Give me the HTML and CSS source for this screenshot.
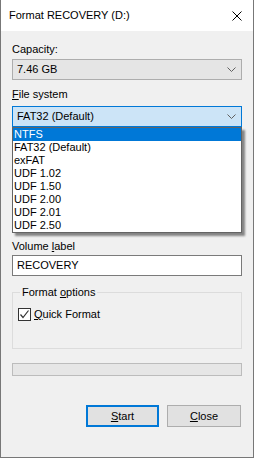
FILE: index.html
```html
<!DOCTYPE html>
<html lang="en">
<head>
    <meta charset="UTF-8">
    <meta name="viewport" content="width=device-width, initial-scale=1.0">
    <title>Format RECOVERY (D:)</title>
    <link rel="stylesheet" href="styles.css">
</head>
<body>
    <div class="window">
        <div class="titlebar">
            <span class="title">Format RECOVERY (D:)</span>
            <svg class="close" width="10" height="10" viewBox="0 0 10 10">
                <path d="M0.5 0.5 L9.5 9.5 M9.5 0.5 L0.5 9.5" stroke="#000" stroke-width="1" fill="none"/>
            </svg>
        </div>

        <div class="content">
            <div class="label label-first">Capacity:</div>
            <div class="combo combo-disabled">
                <span>7.46 GB</span>
                <svg class="chevron" width="9" height="5" viewBox="0 0 9 5"><path d="M0.5 0.5 L4.5 4.5 L8.5 0.5" stroke="#606060" fill="none"/></svg>
            </div>

            <div class="label"><u>F</u>ile system</div>
            <div class="combo-wrap">
                <div class="combo combo-focus">
                    <span>FAT32 (Default)</span>
                    <svg class="chevron" width="9" height="5" viewBox="0 0 9 5"><path d="M0.5 0.5 L4.5 4.5 L8.5 0.5" stroke="#606060" fill="none"/></svg>
                </div>
                <!-- open list of the file system box -->
                <ul class="dropdown">
                    <li class="selected">NTFS</li>
                    <li>FAT32 (Default)</li>
                    <li>exFAT</li>
                    <li>UDF 1.02</li>
                    <li>UDF 1.50</li>
                    <li>UDF 2.00</li>
                    <li>UDF 2.01</li>
                    <li>UDF 2.50</li>
                </ul>
            </div>

            <!-- room taken by the controls the open list covers -->
            <div class="covered"></div>

            <div class="label"><span>Volume <u>l</u>abel</span></div>
            <div class="textbox">RECOVERY</div>

            <fieldset class="group">
                <legend>Format <u>o</u>ptions</legend>
                <label class="check">
                    <span class="box">
                        <svg width="11" height="11" viewBox="0 0 11 11"><path d="M1.5 5.5 L4 8.5 L9.5 1.5" stroke="#333" stroke-width="1.2" fill="none"/></svg>
                    </span>
                    <span><u>Q</u>uick Format</span>
                </label>
            </fieldset>

            <div class="progress"></div>

            <div class="actions">
                <button class="btn btn-default"><u>S</u>tart</button>
                <button class="btn"><u>C</u>lose</button>
            </div>
        </div>
    </div>
</body>
</html>
```

FILE: styles.css
```css
body {
    margin: 0;
    padding: 0;
    font-family: "Liberation Sans", Arial, sans-serif;
    font-size: 11px;
    line-height: 15px;
    color: #000;
}

.window {
    width: 254px;
    height: 458px;
    box-sizing: border-box;
    border: 1px solid #777;
    border-top: none;
    background-color: #f0f0f0;
}

.titlebar {
    height: 31px;
    display: flex;
    align-items: center;
    justify-content: space-between;
    padding: 0 11px 0 8px;
    background-color: #fff;
    line-height: 31px;
}

.close {
    display: block;
}

.content {
    padding: 11px 11px 0 11px;
}

.label {
    height: 15px;
    margin-top: 7px;
}

.label-first {
    margin-top: 0;
}

.combo {
    position: relative;
    height: 21px;
    box-sizing: border-box;
    display: flex;
    align-items: center;
    justify-content: space-between;
    padding: 0 5px 0 4px;
    border: 1px solid #adadad;
    background-color: #e5e5e5;
    margin-top: 2px;
}

.combo-focus {
    border-color: #0078d7;
    background-color: #cce4f7;
    margin-top: 4px;
}

.chevron {
    display: block;
}

.combo-wrap {
    position: relative;
}

.dropdown {
    position: absolute;
    top: 100%;
    left: 0;
    width: 230px;
    box-sizing: border-box;
    margin: 0;
    padding: 0;
    list-style: none;
    background-color: #fff;
    border: 1px solid #646464;
    box-shadow: 3px 3px 2px rgba(0, 0, 0, 0.45);
    z-index: 10;
}

.dropdown li {
    height: 13px;
    line-height: 13px;
    padding-left: 1px;
}

.dropdown li.selected {
    background-color: #0078d7;
    color: #fff;
}

.covered {
    height: 105px;
}

.textbox {
    height: 21px;
    box-sizing: border-box;
    margin-top: 1px;
    padding: 0 4px;
    border: 1px solid #7a7a7a;
    background-color: #fff;
    line-height: 19px;
}

.group {
    margin: 9px 0 0 0;
    padding: 7px 5px 26px 5px;
    border: 1px solid #dcdcdc;
    min-width: 0;
}

.group legend {
    padding: 0 2px;
    margin-left: 2px;
}

.check {
    display: flex;
    align-items: center;
    gap: 3px;
}

.check .box {
    width: 13px;
    height: 13px;
    box-sizing: border-box;
    border: 1px solid #333;
    background-color: #fff;
    display: flex;
    align-items: center;
    justify-content: center;
}

.check svg {
    display: block;
}

.progress {
    height: 13px;
    box-sizing: border-box;
    margin-top: 14px;
    border: 1px solid #bcbcbc;
    background-color: #e6e6e6;
}

.actions {
    display: flex;
    justify-content: flex-end;
    gap: 8px;
    margin-top: 29px;
    padding-right: 1px;
}

.btn {
    height: 22px;
    width: 74px;
    box-sizing: border-box;
    padding: 0;
    font-family: inherit;
    font-size: 11px;
    color: #000;
    border: 1px solid #adadad;
    background-color: #e1e1e1;
}

.btn-default {
    width: 73px;
    border: 2px solid #0078d7;
}
```
